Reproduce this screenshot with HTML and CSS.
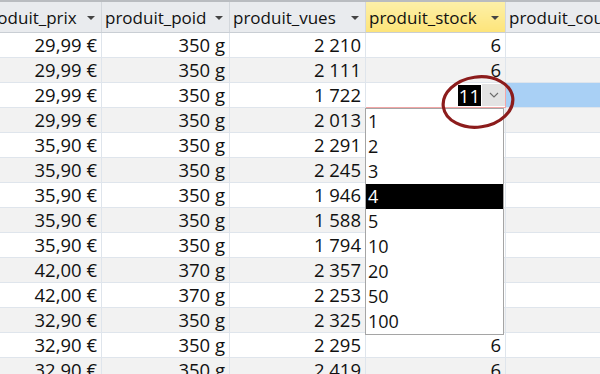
FILE: index.html
```html
<!DOCTYPE html>
<html>
<head>
<meta charset="utf-8">
<link rel="stylesheet" href="styles.css">
</head>
<body>
<div class="sheet">
  <table class="grid">
    <colgroup>
      <col class="c-prix"><col class="c-poid"><col class="c-vues"><col class="c-stock"><col class="c-co">
    </colgroup>
    <thead>
      <tr>
        <th><span>produit_prix</span><i class="arr"></i></th>
        <th><span>produit_poid</span><i class="arr"></i></th>
        <th><span>produit_vues</span><i class="arr"></i></th>
        <th class="active"><span>produit_stock</span><i class="arr"></i></th>
        <th><span>produit_couleur</span><i class="arr"></i></th>
      </tr>
    </thead>
    <tbody>
      <tr><td>29,99 €</td><td>350 g</td><td>2 210</td><td>6</td><td></td></tr>
      <tr><td>29,99 €</td><td>350 g</td><td>2 111</td><td>6</td><td></td></tr>
      <tr class="cur"><td>29,99 €</td><td>350 g</td><td>1 722</td>
        <td class="edit">
          <div class="combo"><span class="val">11</span><span class="btn"><svg width="10" height="6" viewBox="0 0 10 6"><path d="M1 1 L5 5 L9 1" fill="none" stroke="#6b6b6b" stroke-width="1.1"/></svg></span></div>
          <div class="list">
            <div>1</div><div>2</div><div>3</div><div class="hi">4</div><div>5</div><div>10</div><div>20</div><div>50</div><div>100</div>
          </div>
          <svg class="ring" width="80" height="64" viewBox="0 0 80 64"><ellipse cx="40" cy="32" rx="35" ry="25" fill="none" stroke="#8c1c1c" stroke-width="3.2" transform="rotate(-8 40 32)"/></svg>
        </td><td class="sel"></td></tr>
      <tr><td>29,99 €</td><td>350 g</td><td>2 013</td><td>6</td><td></td></tr>
      <tr><td>35,90 €</td><td>350 g</td><td>2 291</td><td>6</td><td></td></tr>
      <tr><td>35,90 €</td><td>350 g</td><td>2 245</td><td>6</td><td></td></tr>
      <tr><td>35,90 €</td><td>350 g</td><td>1 946</td><td>6</td><td></td></tr>
      <tr><td>35,90 €</td><td>350 g</td><td>1 588</td><td>6</td><td></td></tr>
      <tr><td>35,90 €</td><td>350 g</td><td>1 794</td><td>6</td><td></td></tr>
      <tr><td>42,00 €</td><td>370 g</td><td>2 357</td><td>6</td><td></td></tr>
      <tr><td>42,00 €</td><td>370 g</td><td>2 253</td><td>6</td><td></td></tr>
      <tr><td>32,90 €</td><td>350 g</td><td>2 325</td><td>6</td><td></td></tr>
      <tr><td>32,90 €</td><td>350 g</td><td>2 295</td><td>6</td><td></td></tr>
      <tr><td>32,90 €</td><td>350 g</td><td>2 419</td><td>6</td><td></td></tr>
    </tbody>
  </table>
</div>
</body>
</html>
```

FILE: styles.css
```css
html, body {
  margin: 0;
  padding: 0;
  background: #fff;
  overflow: hidden;
}
.sheet {
  width: 600px;
  height: 374px;
  overflow: hidden;
  position: relative;
}
.grid {
  border-collapse: collapse;
  table-layout: fixed;
  width: 759px;
  margin-left: -24px;
  font-family: "Open Sans", "Noto Sans", sans-serif;
  font-size: 18.5px;
  color: #111;
}
.c-prix { width: 125px; }
.c-poid { width: 128px; }
.c-vues { width: 136px; }
.c-stock { width: 140px; }
.c-co { width: 230px; }

thead th {
  height: 30px;
  padding: 0 4px 0 3px;
  background: #e9ebee;
  border-top: 2px solid #b9bcc0;
  border-left: 1px solid #d3d7dc;
  border-right: 1px solid #d3d7dc;
  border-bottom: 1px solid #c9ced4;
  font-weight: normal;
  font-size: 17px;
  text-align: left;
  white-space: nowrap;
  overflow: hidden;
  position: relative;
}
thead th span { display: inline-block; vertical-align: middle; line-height: 22px; }
thead th.active {
  background: linear-gradient(#fdf0a8, #fde47a);
}
.arr {
  position: absolute;
  right: 6px;
  top: 14px;
  width: 0;
  height: 0;
  border-left: 4px solid transparent;
  border-right: 4px solid transparent;
  border-top: 4px solid #444;
}
tbody td {
  height: 24px;
  padding: 0 4px 0 4px;
  text-align: right;
  border: 1px solid #dfe5ec;
  white-space: nowrap;
  overflow: hidden;
  line-height: 22px;
}
tbody tr:nth-child(even) td { background: #f2f2f2; }
tbody tr.cur td { background: #fff; }
tbody td.sel { background: #a9d0f5 !important; }
tbody td.edit {
  position: relative;
  overflow: visible;
  border: 1px solid #f2a6a6;
  padding: 0;
}
.combo {
  display: flex;
  justify-content: flex-end;
  align-items: center;
  height: 24px;
}
.val {
  background: #000;
  color: #fff;
  padding: 0 1px;
  line-height: 21px;
}
.btn {
  width: 23px;
  height: 22px;
  margin-left: 1px;
  background: #e3e3e3;
  display: flex;
  align-items: center;
  justify-content: center;
}
.list {
  position: absolute;
  left: -1px;
  top: 25px;
  width: 137px;
  background: #fff;
  border: 1px solid #a5a5a5;
  z-index: 2;
  text-align: left;
  font-size: 18px;
}
.list div {
  height: 25px;
  line-height: 25px;
  padding-left: 2px;
}
.list div.hi { background: #000; color: #fff; }
.ring {
  position: absolute;
  left: 72px;
  top: -13px;
  z-index: 3;
}
```
